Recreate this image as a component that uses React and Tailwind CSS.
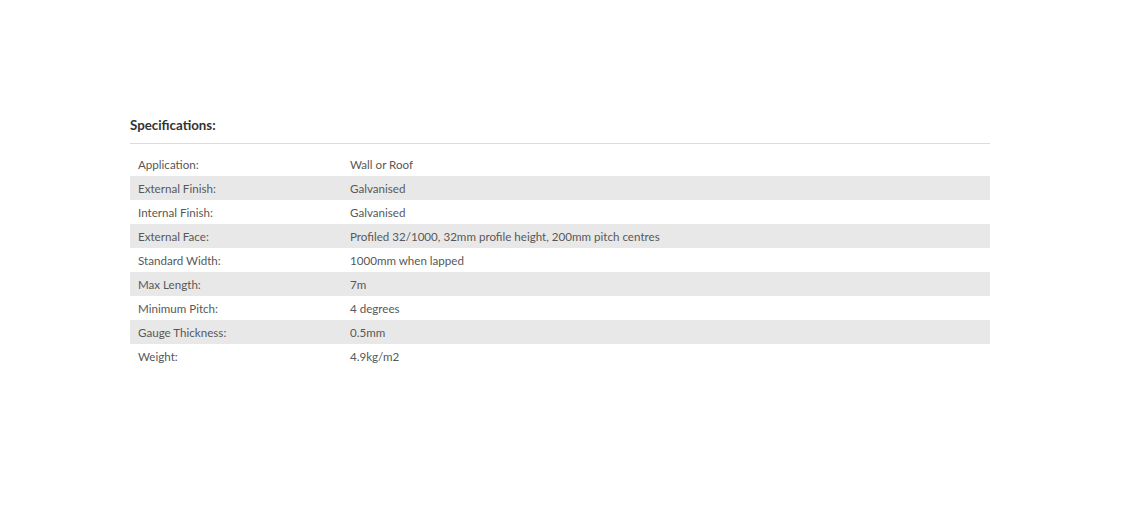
export default function App() {
  const rows = [
    ["Application:", "Wall or Roof"],
    ["External Finish:", "Galvanised"],
    ["Internal Finish:", "Galvanised"],
    ["External Face:", "Profiled 32/1000, 32mm profile height, 200mm pitch centres"],
    ["Standard Width:", "1000mm when lapped"],
    ["Max Length:", "7m"],
    ["Minimum Pitch:", "4 degrees"],
    ["Gauge Thickness:", "0.5mm"],
    ["Weight:", "4.9kg/m2"],
  ];
  return (
    <div className="w-[1133px] h-[517px] bg-white" style={{ fontFamily: "Lato, 'Open Sans', sans-serif" }}>
      <div className="pt-[116px] pl-[130px] w-[990px]">
        <h3 className="text-[13.3px] leading-[18px] font-bold text-[#333333] pb-[9px] border-b border-[#dcdcdc]">Specifications:</h3>
        <div className="mt-[8px]">
          {rows.map(([k, v], i) => (
            <div key={k} className={`flex h-[24px] items-center pt-[1px] text-[11.6px] text-[#585858] ${i % 2 === 1 ? "bg-[#e8e8e8]" : ""}`}>
              <div className="w-[220px] pl-[8px]">{k}</div>
              <div>{v}</div>
            </div>
          ))}
        </div>
      </div>
    </div>
  );
}
